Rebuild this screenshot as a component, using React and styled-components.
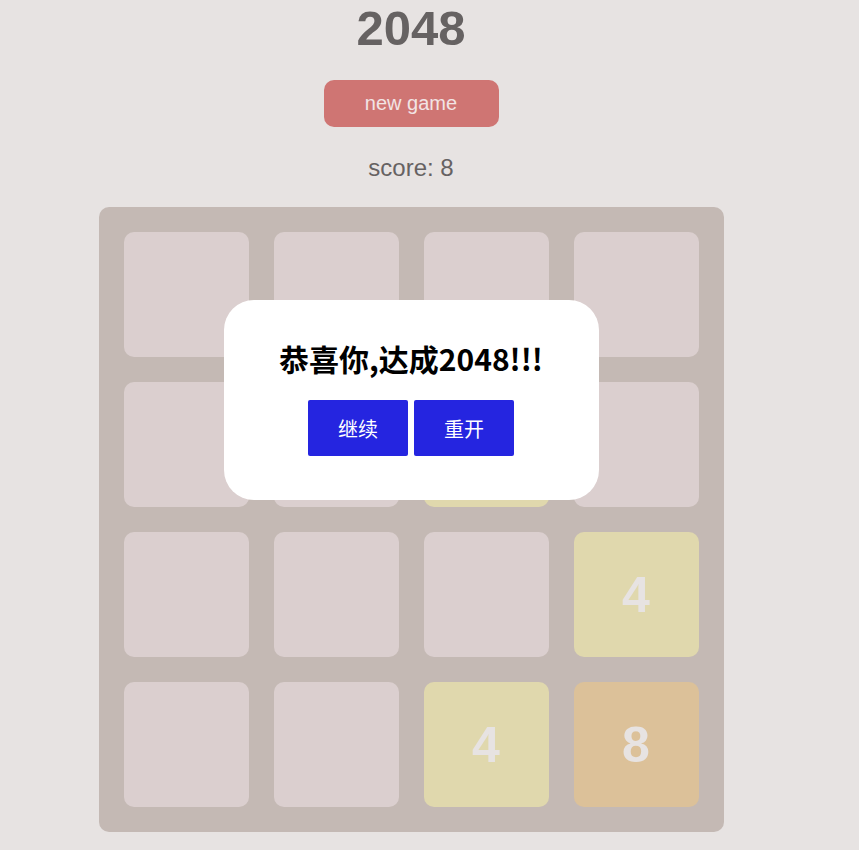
import styled, { createGlobalStyle } from "styled-components";

const GlobalStyle = createGlobalStyle`
  body {
    margin: 0;
    background: #e7e3e2;
    font-family: "Liberation Sans", Arial, sans-serif;
  }
`;

const Page = styled.div`
  width: 822px;
  display: flex;
  flex-direction: column;
  align-items: center;
`;

const Title = styled.h1`
  margin: 0;
  font-size: 49px;
  line-height: 56px;
  font-weight: 700;
  color: #666262;
`;

const NewGame = styled.button`
  margin-top: 24px;
  width: 175px;
  height: 47px;
  border: none;
  border-radius: 10px;
  background: #cf7573;
  color: #f2e4e4;
  font-family: "Liberation Sans", Arial, sans-serif;
  font-size: 20px;
  cursor: pointer;
`;

const Score = styled.div`
  margin-top: 27px;
  font-size: 24px;
  line-height: 27px;
  color: #666262;
`;

const Board = styled.div`
  position: relative;
  margin-top: 26px;
  width: 575px;
  padding: 25px;
  border-radius: 10px;
  background: #c4b9b4;
  display: grid;
  grid-template-columns: repeat(4, 125px);
  grid-auto-rows: 125px;
  gap: 25px;
`;

const tileColors = {
  0: "#dbcfcf",
  2: "#e3dcc0",
  4: "#e0d8ad",
  8: "#dcc199",
};

const Cell = styled.div`
  border-radius: 10px;
  background: ${(p) => tileColors[p.value] || "#dbcfcf"};
  display: flex;
  align-items: center;
  justify-content: center;
  font-size: 50px;
  font-weight: 700;
  color: #e7e3e2;
`;

const Modal = styled.div`
  position: absolute;
  left: 125px;
  top: 93px;
  width: 375px;
  height: 200px;
  box-sizing: border-box;
  padding-top: 37px;
  border-radius: 30px;
  background: #fff;
  text-align: center;
`;

const ModalTitle = styled.h2`
  margin: 0;
  font-family: "Noto Sans CJK SC", sans-serif;
  font-size: 30px;
  line-height: 42px;
  font-weight: 700;
  color: #000;
`;

const Actions = styled.div`
  margin-top: 21px;
  display: flex;
  justify-content: center;
  gap: 6px;
`;

const ModalButton = styled.button`
  width: 100px;
  height: 56px;
  border: none;
  border-radius: 2px;
  background: #2525e0;
  color: #fff;
  font-family: "Noto Sans CJK SC", sans-serif;
  font-size: 20px;
  cursor: pointer;
`;

const board = [
  [0, 0, 0, 0],
  [0, 0, 4, 0],
  [0, 0, 0, 4],
  [0, 0, 4, 8],
];

export default function App() {
  return (
    <Page>
      <GlobalStyle />
      <Title>2048</Title>
      <NewGame>new game</NewGame>
      <Score>score: 8</Score>
      <Board>
        {board.flat().map((v, i) => (
          <Cell key={i} value={v}>
            {v ? v : ""}
          </Cell>
        ))}
        <Modal>
          <ModalTitle>恭喜你,达成2048!!!</ModalTitle>
          <Actions>
            <ModalButton>继续</ModalButton>
            <ModalButton>重开</ModalButton>
          </Actions>
        </Modal>
      </Board>
    </Page>
  );
}
